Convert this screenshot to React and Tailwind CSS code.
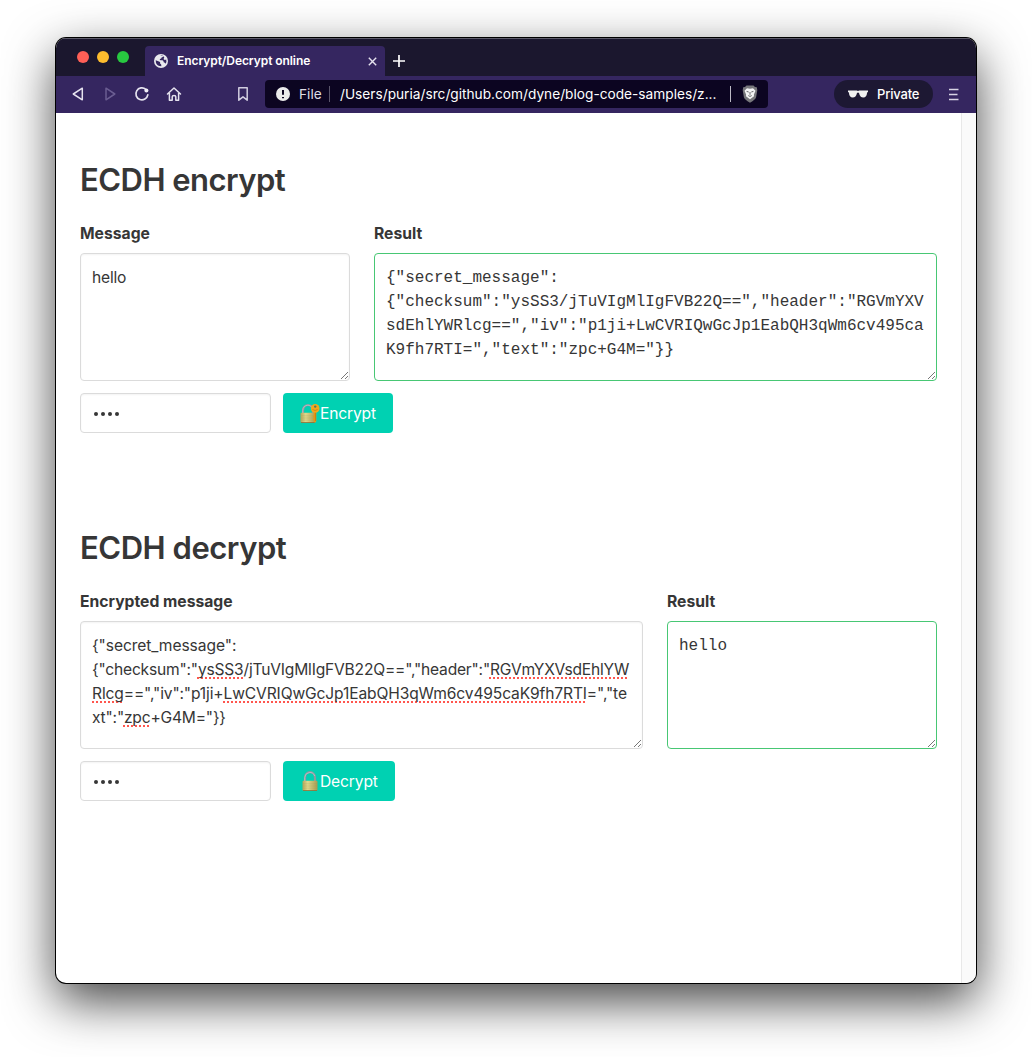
import React from "react";

const SANS = "font-['Inter',sans-serif]";

function Globe() {
  return (
    <svg width="14" height="14" viewBox="0 0 14 14">
      <circle cx="7" cy="7" r="7" fill="#e9e9ee" />
      <path d="M1.7 6.3 5 7.4q1.2.3 1.2 1.4v.9q1.2.4 1.1 1.500v1.100Q3.500 12 2 8.900Z" fill="#352660" />
      <path d="M6.200 1.600Q7.500 1 9.200 1.900 9 3.300 7.600 3.600 7.500 5 6 5.100 5.200 5.700 6.400 6.300H8.500Q9.700 6.700 9.700 8.200q1.400 0 1.700 1.500Q13 7.500 12.200 5.400 11 6.300 9.900 5.500 9.200 4.600 10.300 3.400L9 1.900Z" fill="#352660" />
    </svg>
  );
}

function Shield() {
  return (
    <svg width="16" height="18" viewBox="0 0 16 18">
      <path d="M4.500.5h7l1.500 1.500 1.800.3.500 3-1.200 7Q13.500 14.500 8 17.800 2.500 14.500 1.900 12.300L.7 5.300l.5-3L3 2Z" fill="#77777b" />
      <path d="M5 3.200 8 3.700l3-.5 2.500 2.500-1.600 3.800.1 1.800-2.300 1.600L8 14.200l-1.700-1.300L4 11.300l.1-1.800L2.500 5.700Z" fill="#f5f5f5" />
      <path d="m4.600 6.400 2.100.6M11.400 6.400 9.300 7M8 7v2.800M6.300 10.600 8 11.400l1.700-.8" stroke="#66666a" strokeWidth="1" fill="none" />
    </svg>
  );
}

function Glasses() {
  return (
    <svg width="20" height="8" viewBox="0 0 20 8">
      <path d="M0 .4h8.700L10 1l1.300-.6H20v1.500l-.9.500Q18.700 7.500 15.300 7.500 12 7.500 11 3L10 2.400 9 3Q8 7.500 4.700 7.500 1.300 7.500.9 2.400L0 1.900Z" fill="#f1f1f1" />
    </svg>
  );
}

function Lock({ withKey }) {
  const id = withKey ? "brass-key" : "brass";
  return (
    <svg width="20" height="21" viewBox="0 0 20 21">
      <defs>
        <linearGradient id={id} x1="0" x2="1">
          <stop offset="0" stopColor="#b5a659" />
          <stop offset=".35" stopColor="#ded88d" />
          <stop offset="1" stopColor="#a99b50" />
        </linearGradient>
      </defs>
      <g transform={withKey ? "translate(-1 0)" : "translate(1 0)"}>
        <path d={withKey ? "M4 11V7.500a5 5.500 0 0 1 10 0V11" : "M4 11V6.500a5 5.300 0 0 1 10 0V11"} fill="none" stroke="#8b9aa0" strokeWidth="2.200" />
        <path d={withKey ? "M3.700 11V7.500a5.200 6 0 0 1 10 -1.500" : "M3.700 11V6.500a5.200 5.600 0 0 1 10 -1.500"} fill="none" stroke="#b9bcc4" strokeWidth=".9" />
        <rect x="1.500" y="9.800" width="15" height="10" rx="1" fill={`url(#${id})`} />
        <path d="M2 12.800h14M2 15h14M2 17.200h14" stroke="#97894a" strokeOpacity=".3" strokeWidth=".6" />
        <path d="M2 19.500h14" stroke="#8d6f35" strokeWidth=".8" />
      </g>
      {withKey && (
        <g>
          <path d="M13.700 8h2.600v10.300l-1.400 1.400-1.200-1.200v-1.500l-1-.8 1-1v-1l-1-.8 1-.9Z" fill="#e59a17" />
          <path d="M15.400 9v9" stroke="#b87412" strokeWidth=".7" />
          <circle cx="15.200" cy="5.400" r="4.300" fill="#f2a71c" />
          <circle cx="15.200" cy="3.600" r="1.200" fill="#497c64" />
          <path d="M12.500 6.500q2.500 2 5.200 0" stroke="#c17d13" strokeWidth=".7" fill="none" />
        </g>
      )}
    </svg>
  );
}

function Grip() {
  return (
    <svg className="absolute right-0 bottom-0" width="10" height="10" viewBox="0 0 10 10" shapeRendering="crispEdges">
      <path d="M1.500 8.500 8.500 1.500M5.500 8.500 8.500 5.500" stroke="#555" strokeWidth=".8" />
    </svg>
  );
}

function Toolbar() {
  const line = { fill: "none", stroke: "#e5e2ee", strokeWidth: 1.5, strokeLinejoin: "round", strokeLinecap: "round" };
  return (
    <div className="flex h-[37px] items-center bg-[#352660] pb-px text-white">
      <svg className="ml-4 shrink-0" width="14" height="16" viewBox="0 0 14 16"><path {...line} d="M10.300 2.200v11.600L1.300 8Z" /></svg>
      <svg className="ml-[18px] shrink-0" width="14" height="16" viewBox="0 0 14 16"><path {...line} stroke="#6a5d91" d="M2 2.200v11.600L10.800 8Z" /></svg>
      <svg className="ml-4 shrink-0" width="16" height="16" viewBox="0 0 16 16">
        <path {...line} strokeWidth="1.700" d="M11.800 3.300A6 6 0 1 0 13.800 8.900" />
        <circle cx="12.400" cy="4.400" r="2" fill="#f2f0f8" />
      </svg>
      <svg className="ml-4 shrink-0" width="16" height="16" viewBox="0 0 16 16">
        <path {...line} d="M1.500 8 8 2l6.500 6M3.400 7v7.200h2.800v-3.500q0-1.300 1.800-1.300t1.800 1.300v3.500h2.800V7" />
      </svg>
      <svg className="ml-[55px] shrink-0" width="12" height="16" viewBox="0 0 12 16"><path {...line} stroke="#d1cde0" d="M1.800 1.800h8.400v12.400L6 10.800l-4.200 3.400Z" /></svg>
      <div className="ml-4 flex h-7 w-[503px] shrink-0 items-center rounded-[4px] bg-[#0c0521] text-[13.7px]">
        <svg className="ml-[11px] shrink-0" width="14" height="14" viewBox="0 0 14 14">
          <circle cx="7" cy="7" r="7" fill="#ebebeb" />
          <path d="M7 3v4.700M7 10v1.200" stroke="#0c0521" strokeWidth="2" />
        </svg>
        <span className="ml-[9px] w-[23px] pt-px whitespace-nowrap text-[#dedde3]">File</span>
        <span className="ml-[7px] h-4 w-px bg-[#5b566b]" />
        <span className="ml-[10px] w-[390px] pt-px whitespace-nowrap">/Users/puria/src/github.com/dyne/blog-code-samples/z...</span>
        <span className="h-4 w-px bg-[#bcbac4]" />
        <span className="ml-[11px]"><Shield /></span>
      </div>
      <div className="ml-[66px] flex h-7 w-[99px] shrink-0 items-center rounded-full bg-[#1d1833] pl-[14px] text-[13px] font-medium">
        <Glasses />
        <span className="ml-[9px] pt-px tracking-[-0.18px] whitespace-nowrap">Private</span>
      </div>
      <svg className="ml-[15px] shrink-0" width="11" height="13" viewBox="0 0 11 13"><path d="M1 1.500h9.500M1 6.500h8.500M1 11.500h9.500" stroke="#d8d4e4" strokeWidth="1.600" /></svg>
    </div>
  );
}

function Box({ mono, green, className, children }) {
  return (
    <div
      className={`relative h-32 rounded-[4px] border px-[11px] pt-3 leading-6 whitespace-pre ${
        green ? "border-[#48c774]" : "border-[#dbdbdb] shadow-[inset_0_1px_2px_rgba(10,10,10,0.05)]"
      } ${mono ? "font-['Liberation_Mono',monospace] text-[16px]" : "text-[15.6px]"} ${className || ""}`}
    >
      {children}
      <Grip />
    </div>
  );
}

function Misspelled({ children }) {
  return <span className="underline decoration-[#ff564e] decoration-dotted decoration-[2px] underline-offset-[2px] [text-decoration-skip-ink:none]">{children}</span>;
}

function Field({ label, className, children }) {
  return (
    <div className={className}>
      <div className="mb-2 h-6 pt-px text-[15.7px] leading-6 font-bold">{label}</div>
      {children}
    </div>
  );
}

function Action({ withKey, className, children }) {
  return (
    <div className="mt-3 flex gap-3">
      <div className="flex h-10 w-[191px] items-center gap-[3.300px] rounded-[4px] border border-[#dbdbdb] pt-[2px] pl-[12.500px] shadow-[inset_0_1px_2px_rgba(10,10,10,0.05)]">
        {[0, 1, 2, 3].map((n) => (
          <span key={n} className="size-1 rounded-full bg-[#363636]" />
        ))}
      </div>
      <button className={`flex h-10 items-center rounded-[4px] bg-[#00d1b2] pl-[17px] text-[15.6px] tracking-[-0.15px] text-white ${className}`}>
        <Lock withKey={withKey} />
        <span className="pt-[2px]">{children}</span>
      </button>
    </div>
  );
}

export default function App() {
  return (
    <div className={`${SANS} h-[1057px] w-[1032px] overflow-hidden bg-white pt-[38px] pl-14 text-[#363636]`}>
      <div className="flex h-[945px] w-[920px] flex-col overflow-hidden rounded-[10px] bg-white shadow-[0_0_0_1px_#000,0_18px_50px_rgba(0,0,0,0.74)]">
        <div className="flex h-[38px] shrink-0 bg-[#1b172e] text-white shadow-[inset_0_1px_0_#5c5a69]">
          <div className="flex items-center gap-2 pl-[21px]">
            <span className="size-3 rounded-full bg-[#ff5f57]" />
            <span className="size-3 rounded-full bg-[#febc2e]" />
            <span className="size-3 rounded-full bg-[#28c840]" />
          </div>
          <div className="mt-2 ml-4 flex w-[240px] items-center rounded-t-[4px] bg-[#352660] pl-[9px]">
            <Globe />
            <span className="ml-[9px] w-[191px] text-[12px] font-semibold whitespace-nowrap tracking-[-0.07px]">Encrypt/Decrypt online</span>
            <svg width="9" height="9" viewBox="0 0 9 9" className="shrink-0"><path d="m.8.8 7.400 7.400M8.200.8.8 8.200" stroke="#e5e2ee" strokeWidth="1.400" /></svg>
          </div>
          <svg className="mt-[17px] ml-2" width="12" height="12" viewBox="0 0 12 12"><path d="M6 0v12M0 6h12" stroke="#fff" strokeWidth="1.700" /></svg>
        </div>
        <Toolbar />
        <div className="flex flex-1">
          <main className="w-[905px] pt-[49px] pl-6">
            <section className="h-[368px]">
              <h1 className="mb-[23px] text-[31px] leading-9 font-semibold tracking-[-0.54px]">ECDH encrypt</h1>
              <div className="flex gap-6">
                <Field label="Message" className="w-[270px]"><Box className="tracking-[-0.2px]">hello</Box></Field>
                <Field label="Result" className="w-[563px]">
                  <Box mono green>{'{"secret_message":\n{"checksum":"ysSS3/jTuVIgMlIgFVB22Q==","header":"RGVmYXV\nsdEhlYWRlcg==","iv":"p1ji+LwCVRIQwGcJp1EabQH3qWm6cv495ca\nK9fh7RTI=","text":"zpc+G4M="}}'}</Box>
                </Field>
              </div>
              <Action withKey className="w-[110px]">Encrypt</Action>
            </section>
            <section>
              <h1 className="mb-[23px] text-[31px] leading-9 font-semibold tracking-[-0.48px]">ECDH decrypt</h1>
              <div className="flex gap-6">
                <Field label="Encrypted message" className="w-[563px]">
                  <Box>
                    <div className="tracking-[-0.08px]">{'{"secret_message":'}</div>
                    <div className="tracking-[-0.2px]">{'{"checksum":"'}<Misspelled>ysSS3</Misspelled>{'/jTuVIgMlIgFVB22Q==","header":"'}<Misspelled>RGVmYXVsdEhlYW</Misspelled></div>
                    <div className="tracking-[-0.14px]"><Misspelled>Rlcg</Misspelled>{'==","iv":"p1ji+'}<Misspelled>LwCVRIQwGcJp1EabQH3qWm6cv495caK9fh7RTI</Misspelled>{'=","te'}</div>
                    <div className="tracking-[-0.2px]">{'xt":"'}<Misspelled>zpc</Misspelled>{'+G4M="}}'}</div>
                  </Box>
                </Field>
                <Field label="Result" className="w-[270px]"><Box mono green>hello</Box></Field>
              </div>
              <Action className="w-[112px]">Decrypt</Action>
            </section>
          </main>
          <div className="flex-1 border-l border-[#e8e8e8] bg-[#fafafa]" />
        </div>
      </div>
    </div>
  );
}
